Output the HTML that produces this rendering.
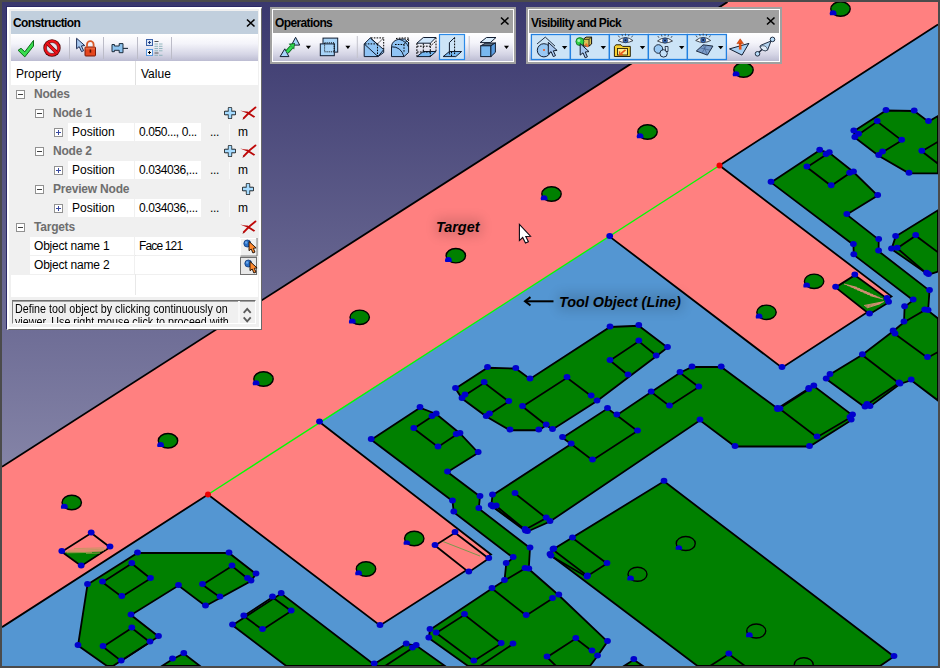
<!DOCTYPE html>
<html><head><meta charset="utf-8"><title>Construction</title>
<style>
html,body{margin:0;padding:0;background:#4b4b4b;}
body{width:940px;height:668px;position:relative;overflow:hidden;font-family:"Liberation Sans",sans-serif;font-size:12px;color:#000;}
.abs{position:absolute;}
.lbl{position:absolute;font-family:"Liberation Sans",sans-serif;font-weight:bold;font-style:italic;font-size:14.4px;color:#000;white-space:nowrap;line-height:15px;}
.panel{position:absolute;box-sizing:border-box;}
.ptitle{position:absolute;left:4px;top:4px;right:4px;height:23px;font-weight:bold;font-size:12px;line-height:23px;white-space:nowrap;}
.ptitle span{position:absolute;left:2px;top:0;}
.tb{position:absolute;background:linear-gradient(#ffffff 0%,#f4f4fa 35%,#d6d6e6 75%,#bcbcd2 100%);}
.row{position:absolute;left:4px;width:247px;height:19px;line-height:18px;white-space:nowrap;}
.g{font-weight:bold;color:#6e6e6e;letter-spacing:-0.2px;}
.w{position:absolute;background:#fff;top:0;height:18px;}
.t{position:absolute;top:0;}
.v{letter-spacing:-0.4px;}
.box{position:absolute;width:7px;height:7px;border:1px solid #919191;background:#fff;top:5px;}
.box i{position:absolute;left:1px;top:3px;width:5px;height:1px;background:#404040;}
.box b{position:absolute;left:3px;top:1px;width:1px;height:5px;background:#3a4aa0;}
.box.p i{background:#3a4aa0;}
.sep{position:absolute;top:3px;width:1px;height:22px;background:#bcbcc8;}
</style></head><body>
<svg width="940" height="668" viewBox="0 0 940 668" style="position:absolute;left:0;top:0">
<defs><linearGradient id="bg" x1="0" y1="0" x2="0" y2="1"><stop offset="0" stop-color="#3a386e"/><stop offset="1" stop-color="#a4a4bf"/></linearGradient><clipPath id="vp"><rect x="2" y="2" width="936" height="664"/></clipPath><filter id="glow" x="-30%" y="-80%" width="160%" height="260%"><feGaussianBlur stdDeviation="6"/></filter></defs>
<rect x="0" y="0" width="940" height="668" fill="#4b4b4b"/>
<rect x="2" y="2" width="936" height="664" fill="url(#bg)"/>
<g clip-path="url(#vp)">
<polygon points="2.00,627.12 938.00,24.53 938.00,666.00 2.00,666.00" fill="#5496d2"/>
<polygon points="2.00,466.70 727.50,2.00 938.00,2.00 938.00,24.53 719.50,165.50 891.50,296.40 782.00,367.70 609.70,236.60 319.50,422.00 491.00,554.50 380.00,625.50 208.00,494.50 2.00,627.12" fill="#ff8080"/>
<g filter="url(#glow)" opacity="0.13"><rect x="436" y="218" width="46" height="18" fill="#000"/><rect x="558" y="293" width="125" height="18" fill="#000"/></g>
<polyline points="2.00,466.70 727.50,2.00" fill="none" stroke="#000" stroke-width="1.8"/>
<polyline points="938.00,24.53 719.50,165.50 891.50,296.40 782.00,367.70 609.70,236.60" fill="none" stroke="#000" stroke-width="1.8"/>
<polyline points="319.50,422.00 491.00,554.50 380.00,625.50 208.00,494.50 2.00,627.12" fill="none" stroke="#000" stroke-width="1.8"/>
<line x1="208" y1="494.5" x2="719.5" y2="165.5" stroke="#00ff00" stroke-width="1.35"/>
<ellipse cx="840.5" cy="9" rx="9.7" ry="7.2" fill="#008000" stroke="#000" stroke-width="1.4"/>
<ellipse cx="743.5" cy="70" rx="9.7" ry="7.2" fill="#008000" stroke="#000" stroke-width="1.4"/>
<ellipse cx="647.5" cy="132" rx="9.7" ry="7.2" fill="#008000" stroke="#000" stroke-width="1.4"/>
<ellipse cx="551.5" cy="194" rx="9.7" ry="7.2" fill="#008000" stroke="#000" stroke-width="1.4"/>
<ellipse cx="455.8" cy="255.7" rx="9.7" ry="7.2" fill="#008000" stroke="#000" stroke-width="1.4"/>
<ellipse cx="359.7" cy="317.3" rx="9.7" ry="7.2" fill="#008000" stroke="#000" stroke-width="1.4"/>
<ellipse cx="263.5" cy="379" rx="9.7" ry="7.2" fill="#008000" stroke="#000" stroke-width="1.4"/>
<ellipse cx="168.0" cy="440.75" rx="9.7" ry="7.2" fill="#008000" stroke="#000" stroke-width="1.4"/>
<ellipse cx="71.75" cy="502.5" rx="9.7" ry="7.2" fill="#008000" stroke="#000" stroke-width="1.4"/>
<ellipse cx="814.1" cy="281.3" rx="9.7" ry="7.2" fill="#008000" stroke="#000" stroke-width="1.4"/>
<ellipse cx="766.5" cy="312.3" rx="9.7" ry="7.2" fill="#008000" stroke="#000" stroke-width="1.4"/>
<ellipse cx="414.25" cy="538.5" rx="9.7" ry="7.2" fill="#008000" stroke="#000" stroke-width="1.4"/>
<ellipse cx="366.0" cy="569" rx="9.7" ry="7.2" fill="#008000" stroke="#000" stroke-width="1.4"/>
<polygon points="91.25,533.00 110.00,547.25 81.25,566.00 61.75,551.75" fill="#ff8080"/>
<polygon points="63.50,552.60 104.00,551.60 81.40,565.80" fill="#008000"/>
<polygon points="91.25,533.00 110.00,547.25 81.25,566.00 61.75,551.75" fill="none" stroke="#000" stroke-width="1.8"/>
<polygon points="455.00,532.75 488.75,558.50 468.75,572.25 435.00,545.50" fill="#ff8080" stroke="#000" stroke-width="1.8"/>
<polygon points="854.80,275.20 887.00,298.60 888.60,302.40 869.50,314.20 835.60,287.40" fill="#008000" stroke="#000" stroke-width="1.8"/>
<g shape-rendering="auto"><line x1="74" y1="548.6" x2="104" y2="547.9" stroke="#b89a5c" stroke-width="0.8"/><line x1="68" y1="550.3" x2="106" y2="549.2" stroke="#b89a5c" stroke-width="0.8"/><line x1="66" y1="551.6" x2="104" y2="550.6" stroke="#b89a5c" stroke-width="0.8"/><line x1="67" y1="552.8" x2="92" y2="552.4" stroke="#b89a5c" stroke-width="0.8"/><line x1="86" y1="553.3" x2="100" y2="553.0" stroke="#b89a5c" stroke-width="0.8"/><line x1="844.0" y1="284.0" x2="857.0" y2="287.4" stroke="#e89080" stroke-width="1" opacity="0.85"/><line x1="847.2" y1="285.4" x2="860.2" y2="288.8" stroke="#e89080" stroke-width="1" opacity="0.85"/><line x1="850.5" y1="286.9" x2="863.5" y2="290.3" stroke="#e89080" stroke-width="1" opacity="0.85"/><line x1="853.8" y1="288.4" x2="866.8" y2="291.8" stroke="#e89080" stroke-width="1" opacity="0.85"/><line x1="857.0" y1="289.8" x2="870.0" y2="293.2" stroke="#e89080" stroke-width="1" opacity="0.85"/><line x1="860.2" y1="291.2" x2="873.2" y2="294.6" stroke="#e89080" stroke-width="1" opacity="0.85"/><line x1="863.5" y1="292.7" x2="876.5" y2="296.1" stroke="#e89080" stroke-width="1" opacity="0.85"/><line x1="866.8" y1="294.1" x2="879.8" y2="297.5" stroke="#e89080" stroke-width="1" opacity="0.85"/><line x1="870.0" y1="295.6" x2="883.0" y2="299.0" stroke="#e89080" stroke-width="1" opacity="0.85"/><line x1="864.0" y1="305.5" x2="884.0" y2="301.6" stroke="#e89080" stroke-width="1" opacity="0.85"/><line x1="865.0" y1="306.3" x2="882.7" y2="302.3" stroke="#e89080" stroke-width="1" opacity="0.85"/><line x1="866.0" y1="307.1" x2="881.3" y2="303.1" stroke="#e89080" stroke-width="1" opacity="0.85"/><line x1="867.0" y1="307.9" x2="880.0" y2="303.8" stroke="#e89080" stroke-width="1" opacity="0.85"/><line x1="443" y1="541.5" x2="480" y2="556" stroke="#58a040" stroke-width="0.8"/></g>
<polygon points="853.80,131.20 886.00,110.50 914.20,111.00 928.50,121.60 938.00,116.00 938.00,173.30 909.00,173.30 878.70,155.70 854.80,137.50" fill="#008000" stroke="#000" stroke-width="1.8"/>
<polyline points="858.60,134.40 877.20,121.60 901.70,140.40 882.50,152.20" fill="none" stroke="#000" stroke-width="1.8"/>
<polyline points="938.00,141.70 921.80,151.30 938.00,163.70" fill="none" stroke="#000" stroke-width="1.8"/>
<polygon points="771.00,182.40 819.70,150.30 829.30,152.80 853.50,172.00 877.70,195.50 846.80,214.60 878.70,239.60 878.60,251.20 929.50,290.60 928.10,310.70 938.00,318.50 938.00,400.50 911.25,380.25 900.00,384.00 870.00,406.50 865.00,407.25 826.25,379.00 830.00,374.50 862.40,354.80 893.10,331.20 904.00,322.20 904.60,306.90 913.20,300.20 853.80,254.90 853.40,244.70" fill="#008000" stroke="#000" stroke-width="1.8"/>
<polyline points="826.00,154.70 806.90,167.20 831.20,185.80 849.60,173.30" fill="none" stroke="#000" stroke-width="1.8"/>
<polyline points="862.50,355.25 900.00,384.00" fill="none" stroke="#000" stroke-width="1.8"/>
<polyline points="867.00,404.50 899.00,383.00" fill="none" stroke="#000" stroke-width="1.8"/>
<polyline points="895.00,334.00 927.50,357.75 938.00,352.00" fill="none" stroke="#000" stroke-width="1.8"/>
<polyline points="904.00,322.20 924.70,310.20 928.10,310.70" fill="none" stroke="#000" stroke-width="1.8"/>
<polygon points="895.60,236.60 938.00,210.20 938.00,271.50 928.50,274.70 891.50,249.10" fill="#008000" stroke="#000" stroke-width="1.8"/>
<polyline points="897.20,248.30 915.70,235.70 938.00,252.30" fill="none" stroke="#000" stroke-width="1.8"/>
<polyline points="897.20,248.30 926.60,273.40" fill="none" stroke="#000" stroke-width="1.8"/>
<polygon points="492.50,495.25 571.25,444.00 562.50,437.75 607.50,408.50 616.75,415.25 651.25,392.00 680.00,372.75 692.00,367.00 721.25,367.00 777.50,408.50 808.75,388.50 813.75,386.00 852.50,415.25 851.25,420.25 809.50,446.50 735.00,446.50 700.00,420.25 550.00,521.50 527.50,531.50 491.25,505.50" fill="#008000" stroke="#000" stroke-width="1.8"/>
<polyline points="571.25,444.00 592.50,460.25 637.50,431.00 616.75,415.25" fill="none" stroke="#000" stroke-width="1.8"/>
<polyline points="651.25,392.00 669.50,406.00 698.75,387.00 680.00,372.75" fill="none" stroke="#000" stroke-width="1.8"/>
<polyline points="780.00,409.00 817.00,437.25 850.00,417.75" fill="none" stroke="#000" stroke-width="1.8"/>
<polyline points="777.50,409.50 808.75,389.50" fill="none" stroke="#000" stroke-width="1.8"/>
<polyline points="496.25,506.00 525.00,529.75 546.25,518.00 515.00,493.50" fill="none" stroke="#000" stroke-width="1.8"/>
<polyline points="493.00,507.00 525.50,531.00" fill="none" stroke="#000" stroke-width="1.8"/>
<polygon points="455.50,388.50 487.50,367.75 515.75,368.50 530.00,379.00 610.00,327.00 638.75,325.75 667.50,347.50 656.25,356.25 597.00,401.00 552.50,429.50 546.25,425.25 538.75,430.25 510.00,430.25 486.25,416.50 462.00,398.50" fill="#008000" stroke="#000" stroke-width="1.8"/>
<polyline points="465.00,395.25 484.25,382.75 508.75,401.50 489.50,414.00" fill="none" stroke="#000" stroke-width="1.8"/>
<polyline points="546.25,425.25 522.50,406.50 567.00,377.75 591.25,396.00" fill="none" stroke="#000" stroke-width="1.8"/>
<polyline points="656.25,355.50 638.75,341.25 610.00,360.50 628.00,375.00" fill="none" stroke="#000" stroke-width="1.8"/>
<polygon points="371.25,439.75 420.00,407.75 436.25,414.00 460.00,433.50 478.25,452.75 447.50,472.00 480.00,496.50 478.75,508.50 530.00,548.00 528.75,569.00 558.75,595.25 607.50,641.50 597.50,656.00 590.00,666.00 468.00,666.00 428.75,638.00 430.00,629.75 492.00,588.50 504.50,580.50 506.25,563.50 513.25,557.75 453.75,512.25 452.50,501.00" fill="#008000" stroke="#000" stroke-width="1.8"/>
<polyline points="432.00,416.50 413.75,428.50 438.00,447.00 456.25,434.75" fill="none" stroke="#000" stroke-width="1.8"/>
<polyline points="492.00,588.50 526.25,615.50 552.50,598.50" fill="none" stroke="#000" stroke-width="1.8"/>
<polyline points="504.50,580.50 525.00,568.50 528.75,569.00" fill="none" stroke="#000" stroke-width="1.8"/>
<polyline points="436.25,633.00 464.50,614.75 501.25,643.50 473.75,661.00 436.25,633.00" fill="none" stroke="#000" stroke-width="1.8"/>
<polyline points="513.00,644.00 480.00,666.00" fill="none" stroke="#000" stroke-width="1.8"/>
<polyline points="556.00,666.00 547.00,657.25 575.75,638.50 592.00,651.00" fill="none" stroke="#000" stroke-width="1.8"/>
<polygon points="137.50,553.00 229.00,553.00 256.00,574.00 251.00,581.00 205.50,606.00 178.50,585.50 131.00,615.00 158.50,636.50 113.00,666.00 107.00,666.00 78.00,645.50 87.50,584.50" fill="#008000" stroke="#000" stroke-width="1.8"/>
<polyline points="131.75,563.50 102.50,582.25 121.75,596.75 150.50,578.50 131.75,563.50" fill="none" stroke="#000" stroke-width="1.8"/>
<polyline points="220.00,597.25 202.50,584.75 232.00,566.00 247.50,578.50" fill="none" stroke="#000" stroke-width="1.8"/>
<polyline points="131.75,628.00 103.00,646.75 121.25,661.00 150.00,642.25 131.75,628.00" fill="none" stroke="#000" stroke-width="1.8"/>
<polygon points="232.50,625.25 281.25,593.50 376.00,666.00 286.25,666.00" fill="#008000" stroke="#000" stroke-width="1.8"/>
<polyline points="272.50,597.25 243.75,616.00 262.50,629.75 291.25,611.00 272.50,597.25" fill="none" stroke="#000" stroke-width="1.8"/>
<polygon points="374.25,664.00 406.25,644.00 416.25,645.50 445.00,666.00 371.00,666.00" fill="#008000" stroke="#000" stroke-width="1.8"/>
<polyline points="412.50,648.00 385.00,666.00" fill="none" stroke="#000" stroke-width="1.8"/>
<polygon points="172.50,659.25 183.75,653.50 200.00,666.00 162.00,666.00" fill="#008000" stroke="#000" stroke-width="1.8"/>
<polygon points="664.00,481.30 894.00,656.50 880.00,666.00 697.50,666.00 550.00,554.75 553.75,549.00" fill="#008000" stroke="#000" stroke-width="1.8"/>
<polyline points="553.00,549.75 587.50,576.00 607.00,563.50 572.50,538.00" fill="none" stroke="#000" stroke-width="1.8"/>
<polyline points="551.00,556.00 587.00,577.00" fill="none" stroke="#000" stroke-width="1.8"/>
<polyline points="710.00,666.00 728.75,654.00 745.00,666.00" fill="none" stroke="#000" stroke-width="1.8"/>
<polygon points="633.75,659.75 643.00,666.00 624.00,666.00" fill="#008000" stroke="#000" stroke-width="1.8"/>
<ellipse cx="685.75" cy="543.5" rx="9.5" ry="7" fill="none" stroke="#000" stroke-width="1.4"/>
<ellipse cx="637.5" cy="574.25" rx="9.5" ry="7" fill="none" stroke="#000" stroke-width="1.4"/>
<ellipse cx="756.25" cy="631" rx="9.5" ry="7" fill="none" stroke="#000" stroke-width="1.4"/>
<ellipse cx="803.75" cy="664.75" rx="9.5" ry="7" fill="none" stroke="#000" stroke-width="1.4"/>
<ellipse cx="91.2" cy="532.4" rx="3.4" ry="3.0" fill="#0000cd"/>
<ellipse cx="110.0" cy="546.6" rx="3.4" ry="3.0" fill="#0000cd"/>
<ellipse cx="81.2" cy="565.4" rx="3.4" ry="3.0" fill="#0000cd"/>
<ellipse cx="61.8" cy="551.1" rx="3.4" ry="3.0" fill="#0000cd"/>
<ellipse cx="455.0" cy="532.1" rx="3.4" ry="3.0" fill="#0000cd"/>
<ellipse cx="488.8" cy="557.9" rx="3.4" ry="3.0" fill="#0000cd"/>
<ellipse cx="468.8" cy="571.6" rx="3.4" ry="3.0" fill="#0000cd"/>
<ellipse cx="435.0" cy="544.9" rx="3.4" ry="3.0" fill="#0000cd"/>
<ellipse cx="854.8" cy="274.6" rx="3.4" ry="3.0" fill="#0000cd"/>
<ellipse cx="887.0" cy="298.0" rx="3.4" ry="3.0" fill="#0000cd"/>
<ellipse cx="888.6" cy="301.8" rx="3.4" ry="3.0" fill="#0000cd"/>
<ellipse cx="869.5" cy="313.6" rx="3.4" ry="3.0" fill="#0000cd"/>
<ellipse cx="835.6" cy="286.8" rx="3.4" ry="3.0" fill="#0000cd"/>
<ellipse cx="853.8" cy="130.6" rx="3.4" ry="3.0" fill="#0000cd"/>
<ellipse cx="886.0" cy="109.9" rx="3.4" ry="3.0" fill="#0000cd"/>
<ellipse cx="914.2" cy="110.4" rx="3.4" ry="3.0" fill="#0000cd"/>
<ellipse cx="928.5" cy="121.0" rx="3.4" ry="3.0" fill="#0000cd"/>
<ellipse cx="909.0" cy="172.7" rx="3.4" ry="3.0" fill="#0000cd"/>
<ellipse cx="878.7" cy="155.1" rx="3.4" ry="3.0" fill="#0000cd"/>
<ellipse cx="854.8" cy="136.9" rx="3.4" ry="3.0" fill="#0000cd"/>
<ellipse cx="858.6" cy="133.8" rx="3.4" ry="3.0" fill="#0000cd"/>
<ellipse cx="877.2" cy="121.0" rx="3.4" ry="3.0" fill="#0000cd"/>
<ellipse cx="901.7" cy="139.8" rx="3.4" ry="3.0" fill="#0000cd"/>
<ellipse cx="882.5" cy="151.6" rx="3.4" ry="3.0" fill="#0000cd"/>
<ellipse cx="921.8" cy="150.7" rx="3.4" ry="3.0" fill="#0000cd"/>
<ellipse cx="771.0" cy="181.8" rx="3.4" ry="3.0" fill="#0000cd"/>
<ellipse cx="819.7" cy="149.7" rx="3.4" ry="3.0" fill="#0000cd"/>
<ellipse cx="829.3" cy="152.2" rx="3.4" ry="3.0" fill="#0000cd"/>
<ellipse cx="853.5" cy="171.4" rx="3.4" ry="3.0" fill="#0000cd"/>
<ellipse cx="877.7" cy="194.9" rx="3.4" ry="3.0" fill="#0000cd"/>
<ellipse cx="846.8" cy="214.0" rx="3.4" ry="3.0" fill="#0000cd"/>
<ellipse cx="878.7" cy="239.0" rx="3.4" ry="3.0" fill="#0000cd"/>
<ellipse cx="878.6" cy="250.6" rx="3.4" ry="3.0" fill="#0000cd"/>
<ellipse cx="929.5" cy="290.0" rx="3.4" ry="3.0" fill="#0000cd"/>
<ellipse cx="928.1" cy="310.1" rx="3.4" ry="3.0" fill="#0000cd"/>
<ellipse cx="911.2" cy="379.6" rx="3.4" ry="3.0" fill="#0000cd"/>
<ellipse cx="900.0" cy="383.4" rx="3.4" ry="3.0" fill="#0000cd"/>
<ellipse cx="870.0" cy="405.9" rx="3.4" ry="3.0" fill="#0000cd"/>
<ellipse cx="865.0" cy="406.6" rx="3.4" ry="3.0" fill="#0000cd"/>
<ellipse cx="826.2" cy="378.4" rx="3.4" ry="3.0" fill="#0000cd"/>
<ellipse cx="830.0" cy="373.9" rx="3.4" ry="3.0" fill="#0000cd"/>
<ellipse cx="862.4" cy="354.2" rx="3.4" ry="3.0" fill="#0000cd"/>
<ellipse cx="893.1" cy="330.6" rx="3.4" ry="3.0" fill="#0000cd"/>
<ellipse cx="904.0" cy="321.6" rx="3.4" ry="3.0" fill="#0000cd"/>
<ellipse cx="904.6" cy="306.3" rx="3.4" ry="3.0" fill="#0000cd"/>
<ellipse cx="913.2" cy="299.6" rx="3.4" ry="3.0" fill="#0000cd"/>
<ellipse cx="853.8" cy="254.3" rx="3.4" ry="3.0" fill="#0000cd"/>
<ellipse cx="853.4" cy="244.1" rx="3.4" ry="3.0" fill="#0000cd"/>
<ellipse cx="826.0" cy="154.1" rx="3.4" ry="3.0" fill="#0000cd"/>
<ellipse cx="806.9" cy="166.6" rx="3.4" ry="3.0" fill="#0000cd"/>
<ellipse cx="831.2" cy="185.2" rx="3.4" ry="3.0" fill="#0000cd"/>
<ellipse cx="849.6" cy="172.7" rx="3.4" ry="3.0" fill="#0000cd"/>
<ellipse cx="867.0" cy="403.9" rx="3.4" ry="3.0" fill="#0000cd"/>
<ellipse cx="899.0" cy="382.4" rx="3.4" ry="3.0" fill="#0000cd"/>
<ellipse cx="895.0" cy="333.4" rx="3.4" ry="3.0" fill="#0000cd"/>
<ellipse cx="927.5" cy="357.1" rx="3.4" ry="3.0" fill="#0000cd"/>
<ellipse cx="924.7" cy="309.6" rx="3.4" ry="3.0" fill="#0000cd"/>
<ellipse cx="895.6" cy="236.0" rx="3.4" ry="3.0" fill="#0000cd"/>
<ellipse cx="928.5" cy="274.1" rx="3.4" ry="3.0" fill="#0000cd"/>
<ellipse cx="891.5" cy="248.5" rx="3.4" ry="3.0" fill="#0000cd"/>
<ellipse cx="897.2" cy="247.7" rx="3.4" ry="3.0" fill="#0000cd"/>
<ellipse cx="915.7" cy="235.1" rx="3.4" ry="3.0" fill="#0000cd"/>
<ellipse cx="926.6" cy="272.8" rx="3.4" ry="3.0" fill="#0000cd"/>
<ellipse cx="492.5" cy="494.6" rx="3.4" ry="3.0" fill="#0000cd"/>
<ellipse cx="571.2" cy="443.4" rx="3.4" ry="3.0" fill="#0000cd"/>
<ellipse cx="562.5" cy="437.1" rx="3.4" ry="3.0" fill="#0000cd"/>
<ellipse cx="607.5" cy="407.9" rx="3.4" ry="3.0" fill="#0000cd"/>
<ellipse cx="616.8" cy="414.6" rx="3.4" ry="3.0" fill="#0000cd"/>
<ellipse cx="651.2" cy="391.4" rx="3.4" ry="3.0" fill="#0000cd"/>
<ellipse cx="680.0" cy="372.1" rx="3.4" ry="3.0" fill="#0000cd"/>
<ellipse cx="692.0" cy="366.4" rx="3.4" ry="3.0" fill="#0000cd"/>
<ellipse cx="721.2" cy="366.4" rx="3.4" ry="3.0" fill="#0000cd"/>
<ellipse cx="777.5" cy="407.9" rx="3.4" ry="3.0" fill="#0000cd"/>
<ellipse cx="808.8" cy="387.9" rx="3.4" ry="3.0" fill="#0000cd"/>
<ellipse cx="813.8" cy="385.4" rx="3.4" ry="3.0" fill="#0000cd"/>
<ellipse cx="852.5" cy="414.6" rx="3.4" ry="3.0" fill="#0000cd"/>
<ellipse cx="851.2" cy="419.6" rx="3.4" ry="3.0" fill="#0000cd"/>
<ellipse cx="809.5" cy="445.9" rx="3.4" ry="3.0" fill="#0000cd"/>
<ellipse cx="735.0" cy="445.9" rx="3.4" ry="3.0" fill="#0000cd"/>
<ellipse cx="700.0" cy="419.6" rx="3.4" ry="3.0" fill="#0000cd"/>
<ellipse cx="550.0" cy="520.9" rx="3.4" ry="3.0" fill="#0000cd"/>
<ellipse cx="527.5" cy="530.9" rx="3.4" ry="3.0" fill="#0000cd"/>
<ellipse cx="491.2" cy="504.9" rx="3.4" ry="3.0" fill="#0000cd"/>
<ellipse cx="592.5" cy="459.6" rx="3.4" ry="3.0" fill="#0000cd"/>
<ellipse cx="637.5" cy="430.4" rx="3.4" ry="3.0" fill="#0000cd"/>
<ellipse cx="669.5" cy="405.4" rx="3.4" ry="3.0" fill="#0000cd"/>
<ellipse cx="698.8" cy="386.4" rx="3.4" ry="3.0" fill="#0000cd"/>
<ellipse cx="780.0" cy="408.4" rx="3.4" ry="3.0" fill="#0000cd"/>
<ellipse cx="817.0" cy="436.6" rx="3.4" ry="3.0" fill="#0000cd"/>
<ellipse cx="850.0" cy="417.1" rx="3.4" ry="3.0" fill="#0000cd"/>
<ellipse cx="777.5" cy="408.9" rx="3.4" ry="3.0" fill="#0000cd"/>
<ellipse cx="808.8" cy="388.9" rx="3.4" ry="3.0" fill="#0000cd"/>
<ellipse cx="496.2" cy="505.4" rx="3.4" ry="3.0" fill="#0000cd"/>
<ellipse cx="525.0" cy="529.1" rx="3.4" ry="3.0" fill="#0000cd"/>
<ellipse cx="546.2" cy="517.4" rx="3.4" ry="3.0" fill="#0000cd"/>
<ellipse cx="515.0" cy="492.9" rx="3.4" ry="3.0" fill="#0000cd"/>
<ellipse cx="493.0" cy="506.4" rx="3.4" ry="3.0" fill="#0000cd"/>
<ellipse cx="525.5" cy="530.4" rx="3.4" ry="3.0" fill="#0000cd"/>
<ellipse cx="455.5" cy="387.9" rx="3.4" ry="3.0" fill="#0000cd"/>
<ellipse cx="487.5" cy="367.1" rx="3.4" ry="3.0" fill="#0000cd"/>
<ellipse cx="515.8" cy="367.9" rx="3.4" ry="3.0" fill="#0000cd"/>
<ellipse cx="530.0" cy="378.4" rx="3.4" ry="3.0" fill="#0000cd"/>
<ellipse cx="610.0" cy="326.4" rx="3.4" ry="3.0" fill="#0000cd"/>
<ellipse cx="638.8" cy="325.1" rx="3.4" ry="3.0" fill="#0000cd"/>
<ellipse cx="667.5" cy="346.9" rx="3.4" ry="3.0" fill="#0000cd"/>
<ellipse cx="656.2" cy="355.6" rx="3.4" ry="3.0" fill="#0000cd"/>
<ellipse cx="597.0" cy="400.4" rx="3.4" ry="3.0" fill="#0000cd"/>
<ellipse cx="552.5" cy="428.9" rx="3.4" ry="3.0" fill="#0000cd"/>
<ellipse cx="546.2" cy="424.6" rx="3.4" ry="3.0" fill="#0000cd"/>
<ellipse cx="538.8" cy="429.6" rx="3.4" ry="3.0" fill="#0000cd"/>
<ellipse cx="510.0" cy="429.6" rx="3.4" ry="3.0" fill="#0000cd"/>
<ellipse cx="486.2" cy="415.9" rx="3.4" ry="3.0" fill="#0000cd"/>
<ellipse cx="462.0" cy="397.9" rx="3.4" ry="3.0" fill="#0000cd"/>
<ellipse cx="465.0" cy="394.6" rx="3.4" ry="3.0" fill="#0000cd"/>
<ellipse cx="484.2" cy="382.1" rx="3.4" ry="3.0" fill="#0000cd"/>
<ellipse cx="508.8" cy="400.9" rx="3.4" ry="3.0" fill="#0000cd"/>
<ellipse cx="489.5" cy="413.4" rx="3.4" ry="3.0" fill="#0000cd"/>
<ellipse cx="522.5" cy="405.9" rx="3.4" ry="3.0" fill="#0000cd"/>
<ellipse cx="567.0" cy="377.1" rx="3.4" ry="3.0" fill="#0000cd"/>
<ellipse cx="591.2" cy="395.4" rx="3.4" ry="3.0" fill="#0000cd"/>
<ellipse cx="638.8" cy="340.6" rx="3.4" ry="3.0" fill="#0000cd"/>
<ellipse cx="610.0" cy="359.9" rx="3.4" ry="3.0" fill="#0000cd"/>
<ellipse cx="628.0" cy="374.4" rx="3.4" ry="3.0" fill="#0000cd"/>
<ellipse cx="371.2" cy="439.1" rx="3.4" ry="3.0" fill="#0000cd"/>
<ellipse cx="420.0" cy="407.1" rx="3.4" ry="3.0" fill="#0000cd"/>
<ellipse cx="436.2" cy="413.4" rx="3.4" ry="3.0" fill="#0000cd"/>
<ellipse cx="460.0" cy="432.9" rx="3.4" ry="3.0" fill="#0000cd"/>
<ellipse cx="478.2" cy="452.1" rx="3.4" ry="3.0" fill="#0000cd"/>
<ellipse cx="447.5" cy="471.4" rx="3.4" ry="3.0" fill="#0000cd"/>
<ellipse cx="480.0" cy="495.9" rx="3.4" ry="3.0" fill="#0000cd"/>
<ellipse cx="478.8" cy="507.9" rx="3.4" ry="3.0" fill="#0000cd"/>
<ellipse cx="530.0" cy="547.4" rx="3.4" ry="3.0" fill="#0000cd"/>
<ellipse cx="528.8" cy="568.4" rx="3.4" ry="3.0" fill="#0000cd"/>
<ellipse cx="558.8" cy="594.6" rx="3.4" ry="3.0" fill="#0000cd"/>
<ellipse cx="607.5" cy="640.9" rx="3.4" ry="3.0" fill="#0000cd"/>
<ellipse cx="597.5" cy="655.4" rx="3.4" ry="3.0" fill="#0000cd"/>
<ellipse cx="428.8" cy="637.4" rx="3.4" ry="3.0" fill="#0000cd"/>
<ellipse cx="430.0" cy="629.1" rx="3.4" ry="3.0" fill="#0000cd"/>
<ellipse cx="492.0" cy="587.9" rx="3.4" ry="3.0" fill="#0000cd"/>
<ellipse cx="504.5" cy="579.9" rx="3.4" ry="3.0" fill="#0000cd"/>
<ellipse cx="506.2" cy="562.9" rx="3.4" ry="3.0" fill="#0000cd"/>
<ellipse cx="513.2" cy="557.1" rx="3.4" ry="3.0" fill="#0000cd"/>
<ellipse cx="453.8" cy="511.6" rx="3.4" ry="3.0" fill="#0000cd"/>
<ellipse cx="452.5" cy="500.4" rx="3.4" ry="3.0" fill="#0000cd"/>
<ellipse cx="432.0" cy="415.9" rx="3.4" ry="3.0" fill="#0000cd"/>
<ellipse cx="413.8" cy="427.9" rx="3.4" ry="3.0" fill="#0000cd"/>
<ellipse cx="438.0" cy="446.4" rx="3.4" ry="3.0" fill="#0000cd"/>
<ellipse cx="456.2" cy="434.1" rx="3.4" ry="3.0" fill="#0000cd"/>
<ellipse cx="526.2" cy="614.9" rx="3.4" ry="3.0" fill="#0000cd"/>
<ellipse cx="552.5" cy="597.9" rx="3.4" ry="3.0" fill="#0000cd"/>
<ellipse cx="525.0" cy="567.9" rx="3.4" ry="3.0" fill="#0000cd"/>
<ellipse cx="436.2" cy="632.4" rx="3.4" ry="3.0" fill="#0000cd"/>
<ellipse cx="464.5" cy="614.1" rx="3.4" ry="3.0" fill="#0000cd"/>
<ellipse cx="501.2" cy="642.9" rx="3.4" ry="3.0" fill="#0000cd"/>
<ellipse cx="473.8" cy="660.4" rx="3.4" ry="3.0" fill="#0000cd"/>
<ellipse cx="513.0" cy="643.4" rx="3.4" ry="3.0" fill="#0000cd"/>
<ellipse cx="547.0" cy="656.6" rx="3.4" ry="3.0" fill="#0000cd"/>
<ellipse cx="575.8" cy="637.9" rx="3.4" ry="3.0" fill="#0000cd"/>
<ellipse cx="592.0" cy="650.4" rx="3.4" ry="3.0" fill="#0000cd"/>
<ellipse cx="137.5" cy="552.4" rx="3.4" ry="3.0" fill="#0000cd"/>
<ellipse cx="229.0" cy="552.4" rx="3.4" ry="3.0" fill="#0000cd"/>
<ellipse cx="256.0" cy="573.4" rx="3.4" ry="3.0" fill="#0000cd"/>
<ellipse cx="251.0" cy="580.4" rx="3.4" ry="3.0" fill="#0000cd"/>
<ellipse cx="205.5" cy="605.4" rx="3.4" ry="3.0" fill="#0000cd"/>
<ellipse cx="178.5" cy="584.9" rx="3.4" ry="3.0" fill="#0000cd"/>
<ellipse cx="131.0" cy="614.4" rx="3.4" ry="3.0" fill="#0000cd"/>
<ellipse cx="158.5" cy="635.9" rx="3.4" ry="3.0" fill="#0000cd"/>
<ellipse cx="78.0" cy="644.9" rx="3.4" ry="3.0" fill="#0000cd"/>
<ellipse cx="87.5" cy="583.9" rx="3.4" ry="3.0" fill="#0000cd"/>
<ellipse cx="131.8" cy="562.9" rx="3.4" ry="3.0" fill="#0000cd"/>
<ellipse cx="102.5" cy="581.6" rx="3.4" ry="3.0" fill="#0000cd"/>
<ellipse cx="121.8" cy="596.1" rx="3.4" ry="3.0" fill="#0000cd"/>
<ellipse cx="150.5" cy="577.9" rx="3.4" ry="3.0" fill="#0000cd"/>
<ellipse cx="220.0" cy="596.6" rx="3.4" ry="3.0" fill="#0000cd"/>
<ellipse cx="202.5" cy="584.1" rx="3.4" ry="3.0" fill="#0000cd"/>
<ellipse cx="232.0" cy="565.4" rx="3.4" ry="3.0" fill="#0000cd"/>
<ellipse cx="247.5" cy="577.9" rx="3.4" ry="3.0" fill="#0000cd"/>
<ellipse cx="131.8" cy="627.4" rx="3.4" ry="3.0" fill="#0000cd"/>
<ellipse cx="103.0" cy="646.1" rx="3.4" ry="3.0" fill="#0000cd"/>
<ellipse cx="121.2" cy="660.4" rx="3.4" ry="3.0" fill="#0000cd"/>
<ellipse cx="150.0" cy="641.6" rx="3.4" ry="3.0" fill="#0000cd"/>
<ellipse cx="232.5" cy="624.6" rx="3.4" ry="3.0" fill="#0000cd"/>
<ellipse cx="281.2" cy="592.9" rx="3.4" ry="3.0" fill="#0000cd"/>
<ellipse cx="272.5" cy="596.6" rx="3.4" ry="3.0" fill="#0000cd"/>
<ellipse cx="243.8" cy="615.4" rx="3.4" ry="3.0" fill="#0000cd"/>
<ellipse cx="262.5" cy="629.1" rx="3.4" ry="3.0" fill="#0000cd"/>
<ellipse cx="291.2" cy="610.4" rx="3.4" ry="3.0" fill="#0000cd"/>
<ellipse cx="374.2" cy="663.4" rx="3.4" ry="3.0" fill="#0000cd"/>
<ellipse cx="406.2" cy="643.4" rx="3.4" ry="3.0" fill="#0000cd"/>
<ellipse cx="416.2" cy="644.9" rx="3.4" ry="3.0" fill="#0000cd"/>
<ellipse cx="412.5" cy="647.4" rx="3.4" ry="3.0" fill="#0000cd"/>
<ellipse cx="172.5" cy="658.6" rx="3.4" ry="3.0" fill="#0000cd"/>
<ellipse cx="183.8" cy="652.9" rx="3.4" ry="3.0" fill="#0000cd"/>
<ellipse cx="664.0" cy="480.7" rx="3.4" ry="3.0" fill="#0000cd"/>
<ellipse cx="894.0" cy="655.9" rx="3.4" ry="3.0" fill="#0000cd"/>
<ellipse cx="550.0" cy="554.1" rx="3.4" ry="3.0" fill="#0000cd"/>
<ellipse cx="553.8" cy="548.4" rx="3.4" ry="3.0" fill="#0000cd"/>
<ellipse cx="553.0" cy="549.1" rx="3.4" ry="3.0" fill="#0000cd"/>
<ellipse cx="587.5" cy="575.4" rx="3.4" ry="3.0" fill="#0000cd"/>
<ellipse cx="607.0" cy="562.9" rx="3.4" ry="3.0" fill="#0000cd"/>
<ellipse cx="572.5" cy="537.4" rx="3.4" ry="3.0" fill="#0000cd"/>
<ellipse cx="551.0" cy="555.4" rx="3.4" ry="3.0" fill="#0000cd"/>
<ellipse cx="587.0" cy="576.4" rx="3.4" ry="3.0" fill="#0000cd"/>
<ellipse cx="728.8" cy="653.4" rx="3.4" ry="3.0" fill="#0000cd"/>
<ellipse cx="633.8" cy="659.1" rx="3.4" ry="3.0" fill="#0000cd"/>
<ellipse cx="609.7" cy="236.0" rx="3.4" ry="3.0" fill="#0000cd"/>
<ellipse cx="319.5" cy="421.4" rx="3.4" ry="3.0" fill="#0000cd"/>
<ellipse cx="782.0" cy="367.1" rx="3.4" ry="3.0" fill="#0000cd"/>
<ellipse cx="380.0" cy="624.9" rx="3.4" ry="3.0" fill="#0000cd"/>
<path d="M830.0,15.3 L829.7,13.6 A3.4,3.4 0 0 1 836.5,13.6 L836.2,15.3 Z" fill="#0000cd"/>
<path d="M733.0,76.3 L732.7,74.6 A3.4,3.4 0 0 1 739.5,74.6 L739.2,76.3 Z" fill="#0000cd"/>
<path d="M637.0,138.3 L636.7,136.6 A3.4,3.4 0 0 1 643.5,136.6 L643.2,138.3 Z" fill="#0000cd"/>
<path d="M541.0,200.3 L540.7,198.6 A3.4,3.4 0 0 1 547.5,198.6 L547.2,200.3 Z" fill="#0000cd"/>
<path d="M445.3,262.0 L445.0,260.3 A3.4,3.4 0 0 1 451.8,260.3 L451.5,262.0 Z" fill="#0000cd"/>
<path d="M349.2,323.6 L348.9,321.9 A3.4,3.4 0 0 1 355.7,321.9 L355.4,323.6 Z" fill="#0000cd"/>
<path d="M253.0,385.3 L252.7,383.6 A3.4,3.4 0 0 1 259.5,383.6 L259.2,385.3 Z" fill="#0000cd"/>
<path d="M157.5,447.1 L157.2,445.4 A3.4,3.4 0 0 1 164.0,445.4 L163.7,447.1 Z" fill="#0000cd"/>
<path d="M61.2,508.8 L60.9,507.1 A3.4,3.4 0 0 1 67.8,507.1 L67.4,508.8 Z" fill="#0000cd"/>
<path d="M803.6,287.6 L803.3,285.9 A3.4,3.4 0 0 1 810.1,285.9 L809.8,287.6 Z" fill="#0000cd"/>
<path d="M756.0,318.6 L755.7,316.9 A3.4,3.4 0 0 1 762.5,316.9 L762.2,318.6 Z" fill="#0000cd"/>
<path d="M403.8,544.8 L403.5,543.1 A3.4,3.4 0 0 1 410.2,543.1 L410.0,544.8 Z" fill="#0000cd"/>
<path d="M355.5,575.3 L355.2,573.6 A3.4,3.4 0 0 1 362.0,573.6 L361.7,575.3 Z" fill="#0000cd"/>
<path d="M675.8,549.8 L675.5,548.1 A3.4,3.4 0 0 1 682.2,548.1 L682.0,549.8 Z" fill="#0000cd"/>
<path d="M627.5,580.5 L627.2,578.8 A3.4,3.4 0 0 1 634.0,578.8 L633.7,580.5 Z" fill="#0000cd"/>
<path d="M746.2,637.3 L746.0,635.6 A3.4,3.4 0 0 1 752.8,635.6 L752.5,637.3 Z" fill="#0000cd"/>
<path d="M793.8,671.0 L793.5,669.3 A3.4,3.4 0 0 1 800.2,669.3 L800.0,671.0 Z" fill="#0000cd"/>
<circle cx="208" cy="494.5" r="3" fill="#f00000" shape-rendering="auto"/><circle cx="719.5" cy="165.5" r="3" fill="#f00000" shape-rendering="auto"/>
</g>
<g shape-rendering="auto"><line x1="526" y1="301.3" x2="553.5" y2="301.3" stroke="#000" stroke-width="2"/><polyline points="530.5,297.1 525,301.3 530.5,305.5" fill="none" stroke="#000" stroke-width="2"/>
<path d="M519.4,224.4 L519.4,240.6 L522.7,237.5 L525.5,243 L528.4,241.7 L525.8,236.4 L530.5,236.2 Z" fill="#fff" stroke="#0a0a14" stroke-width="1.1" stroke-linejoin="miter"/></g>
</svg>
<div class="lbl" style="left:436px;top:219.5px;">Target</div>
<div class="lbl" style="left:559px;top:295px;">Tool Object (Line)</div>

<!-- Construction panel -->
<div class="panel" id="cons" style="left:7px;top:7px;width:255px;height:323px;background:#f0f0f0;border-top:2px solid #fff;border-left:2px solid #fff;border-right:1px solid #696969;border-bottom:1px solid #696969;box-shadow:-1px -1px 0 #2a2866;">
  <div class="abs" style="right:0;top:0;bottom:0;width:2px;background:#fff;"></div>
  <div class="abs" style="left:0;right:0;bottom:0;height:2px;background:#fff;"></div>
  <div class="abs" style="left:2px;top:2px;width:247px;height:23px;background:#c1cfdd;"></div>
  <div class="abs" style="left:4px;top:3px;height:23px;line-height:23px;font-weight:bold;letter-spacing:-0.62px;">Construction</div>
  <svg class="abs" style="left:236px;top:9px" width="12" height="11" viewBox="0 0 12 11"><path d="M2,1.5 L9.5,8.5 M9.5,1.5 L2,8.5" stroke="#000" stroke-width="1.6" fill="none"/></svg>
  <!-- toolbar -->
  <div class="tb" style="left:2px;top:25px;width:247px;height:27px;">
    <svg class="abs" style="left:0;top:0" width="247" height="28" viewBox="0 0 247 28">
      <!-- check -->
      <path d="M7.100,16.300 L10,14.300 L13.800,17.800 L22.500,6.400 L22.500,12 L13.800,22.900 Z" fill="#38de50" stroke="#0c6a18" stroke-width="1" stroke-linejoin="round"/>
      <!-- no entry -->
      <circle cx="41" cy="14" r="8.700" fill="#5a0808"/>
      <circle cx="41" cy="14" r="7.900" fill="#f01018"/>
      <circle cx="41" cy="14" r="5.500" fill="#e4e4f0" stroke="#5a0808" stroke-width="0.600"/>
      <path d="M36.500,9.500 L45.500,18.500" stroke="#5a0808" stroke-width="3.600"/>
      <path d="M36.200,9.200 L45.800,18.800" stroke="#f01018" stroke-width="2.400"/>
      <!-- cursor + lock -->
      <path d="M65.600,4.300 L65.600,14.800 L68.200,12.600 L70.600,17.600 L72.600,16.700 L70.400,11.900 L73.800,11.600 Z" fill="#a8c8f0" stroke="#1c2c54" stroke-width="1" stroke-linejoin="round"/>
      <rect x="74" y="13" width="10.500" height="9" rx="0.800" fill="#e4461e" stroke="#7a1808" stroke-width="1"/>
      <path d="M76,13 V10.500 a3.300,3.300 0 0 1 6.600,0 V13" fill="none" stroke="#d85828" stroke-width="1.800"/>
      <rect x="78.600" y="15.200" width="1.600" height="3.400" fill="#5a1000"/>
      <rect x="74.500" y="13.500" width="9.500" height="2" fill="#f07850" opacity="0.600"/>
      <!-- pin -->
      <path d="M101,10.500 h2.400 v1.500 h4.800 v-2.400 h3.800 v9.100 h-3.800 v-2.400 h-4.800 v1.400 h-2.400 z" fill="#8ec4f0" stroke="#1c2c3c" stroke-width="1" stroke-linejoin="round"/>
      <path d="M112,14.400 H117" stroke="#1c2c3c" stroke-width="1.100"/>
      <!-- list -->
      <rect x="135.500" y="5.500" width="6" height="6" fill="#dce8f8" stroke="#3c62a8"/><path d="M137,8.5 h3 M138.500,7 v3" stroke="#203a80" stroke-width="1"/>
      <rect x="135.500" y="15.500" width="6" height="6" fill="#f4f8fc" stroke="#5a9ae0"/><path d="M137,18.500 h3 M138.500,17 v3" stroke="#000" stroke-width="1"/>
      <path d="M143.500,7.500 h4 M143.500,19 h4" stroke="#555" stroke-width="1"/><path d="M143.500,10 h8 M143.500,12.300 h8 M143.500,14.500 h8 M143.500,16.800 h8 M143.500,21.300 h8" stroke="#88b0b8" stroke-width="0.900" stroke-dasharray="3.500,1"/>
    </svg>
    <div class="sep" style="left:58px"></div>
    <div class="sep" style="left:92px"></div>
    <div class="sep" style="left:126px"></div>
    <div class="sep" style="left:160px"></div>
  </div>
  <!-- table -->
  <div class="abs" style="left:2px;top:52px;width:247px;height:236px;background:#fff;"></div>
  <div class="abs" style="left:2px;top:76px;width:247px;height:152px;background:#f0f0f0;"></div><div class="abs" style="left:2px;top:228px;width:247px;height:38px;background:#f0f0f0;"></div>
  <div class="abs" style="left:125.5px;top:52px;width:1px;height:24px;background:#e0e0e0;"></div>
  <div class="abs" style="left:125.5px;top:228px;width:1px;height:58px;background:#e8e8e8;"></div>
  <div class="abs" style="left:7px;top:53px;height:24px;line-height:24px;">Property</div>
  <div class="abs" style="left:132px;top:53px;height:24px;line-height:24px;">Value</div>
  <div id="rows" class="abs" style="left:-4px;top:76px;width:251px;height:200px;">
    <div class="row g" style="top:0px;"><div class="box" style="left:7px"><i></i></div><span class="t" style="left:25px">Nodes</span></div>
    <div class="row g" style="top:19px;"><div class="box" style="left:26px"><i></i></div><span class="t" style="left:44px">Node 1</span></div>
    <div class="row" style="top:38px;"><div class="box p" style="left:45px"><i></i><b></b></div><div class="w" style="left:59px;width:66px"></div><div class="w" style="left:126px;width:66px"></div><span class="t" style="left:63px">Position</span><span class="t v" style="left:130px">0.050..., 0...</span><span class="t" style="left:201px;letter-spacing:-0.3px">...</span><div class="abs" style="left:220px;top:1px;width:1px;height:17px;background:#fafafa"></div><span class="t" style="left:229px">m</span></div>
    <div class="row g" style="top:57px;"><div class="box" style="left:26px"><i></i></div><span class="t" style="left:44px">Node 2</span></div>
    <div class="row" style="top:76px;"><div class="box p" style="left:45px"><i></i><b></b></div><div class="w" style="left:59px;width:66px"></div><div class="w" style="left:126px;width:66px"></div><span class="t" style="left:63px">Position</span><span class="t v" style="left:130px">0.034036,...</span><span class="t" style="left:201px;letter-spacing:-0.3px">...</span><div class="abs" style="left:220px;top:1px;width:1px;height:17px;background:#fafafa"></div><span class="t" style="left:229px">m</span></div>
    <div class="row g" style="top:95px;"><div class="box" style="left:26px"><i></i></div><span class="t" style="left:44px">Preview Node</span></div>
    <div class="row" style="top:114px;"><div class="box p" style="left:45px"><i></i><b></b></div><div class="w" style="left:59px;width:66px"></div><div class="w" style="left:126px;width:66px"></div><span class="t" style="left:63px">Position</span><span class="t v" style="left:130px">0.034036,...</span><span class="t" style="left:201px;letter-spacing:-0.3px">...</span><div class="abs" style="left:220px;top:1px;width:1px;height:17px;background:#fafafa"></div><span class="t" style="left:229px">m</span></div>
    <div class="row g" style="top:133px;"><div class="box" style="left:7px"><i></i></div><span class="t" style="left:25px">Targets</span></div>
    <div class="row" style="top:152px;"><div class="w" style="left:21px;width:104px"></div><div class="w" style="left:126px;width:105px"></div><span class="t" style="left:25px;letter-spacing:-0.2px">Object name 1</span><span class="t" style="left:130px;letter-spacing:-0.85px">Face 121</span></div>
    <div class="row" style="top:171px;"><div class="w" style="left:21px;width:104px"></div><div class="w" style="left:126px;width:105px"></div><span class="t" style="left:25px;letter-spacing:-0.2px">Object name 2</span></div>
  </div>
  <!-- row icons -->
  <svg class="abs" style="left:0;top:76px" width="251" height="200" viewBox="0 0 251 200">
    <defs>
      <g id="plus"><path d="M-1.300,-5 h2.600 v3.700 h3.700 v2.600 h-3.700 v3.700 h-2.600 v-3.700 h-3.700 v-2.600 h3.700 z" fill="#a8dcff" stroke="#000" stroke-width="1.700" stroke-linejoin="round"/><path d="M-1.300,-5 h2.600 v3.700 h3.700 v2.600 h-3.700 v3.700 h-2.600 v-3.700 h-3.700 v-2.600 h3.700 z" fill="#a8dcff" stroke="#a8dcff" stroke-width="0.300" stroke-linejoin="round"/></g>
      <g id="rx"><path d="M7.400,-5.600 Q1,-1 -4.200,5.200" stroke="#c00808" stroke-width="1.900" stroke-linecap="round" fill="none"/><path d="M-7.800,-2.600 Q-3,-1.200 -0.500,-1.500 L7.200,3.400 L5.900,4.800 L-1.200,0.200 Q-4,-0.800 -7.800,-2.600 Z" fill="#b80808"/><path d="M-4.200,5.200 L-5.200,6.600" stroke="#702020" stroke-width="0.700"/></g>
      <g id="pick"><circle cx="-0.700" cy="-2" r="3.500" fill="#2a70c8" stroke="#123a78" stroke-width="0.800"/><circle cx="-1.800" cy="-3" r="1.200" fill="#6aa8ec"/><path d="M1,-4 L1,5.200 L3.200,3.500 L4.900,7.500 L7,6.600 L5.300,2.800 L8.100,2.400 Z" fill="#ff8a30" stroke="#1a0a00" stroke-width="0.900" stroke-linejoin="round"/></g>
    </defs>
    <use href="#plus" x="221" y="28"/><use href="#rx" x="239" y="28"/>
    <use href="#plus" x="221" y="66"/><use href="#rx" x="239" y="66"/>
    <use href="#plus" x="239" y="104"/>
    <use href="#rx" x="239" y="142"/>
    <rect x="231.500" y="153.500" width="16" height="17" fill="#f0f0f0" stroke="#fff"/><path d="M231.500,171 H248 V153" fill="none" stroke="#707070" stroke-width="1"/>
    <use href="#pick" x="239" y="160.500"/>
    <rect x="231.500" y="172.500" width="16" height="17" fill="#e8e8e8" stroke="#707070"/>
    <use href="#pick" x="240" y="180.500"/>
  </svg>
  <!-- text box -->
  <div class="abs" style="left:3px;top:291px;width:244px;height:24px;background:#f0f0f0;border-top:1px solid #6c6c6c;border-left:1px solid #828282;border-right:1px solid #fff;border-bottom:1px solid #fff;overflow:hidden;box-sizing:border-box;">
    <div class="abs" style="left:0;top:0;width:243px;height:1px;background:#a0a0a0"></div>
    <div class="abs" style="left:1.500px;top:2px;width:260px;font-size:12px;line-height:13px;white-space:nowrap;transform:scaleX(0.893);transform-origin:0 0;">Define tool object by clicking continuously on<br>viewer. Use right mouse click to proceed with</div>
    <div class="abs" style="left:225px;top:0;width:2px;height:23px;background:#f8f8f8"></div>
    <svg class="abs" style="left:226.500px;top:1.500px" width="16" height="22" viewBox="0 0 16 22"><path d="M3.700,9.800 L7.200,5.800 L10.700,9.800 M3.700,14.300 L7.200,18.300 L10.700,14.300" fill="none" stroke="#5a5a5a" stroke-width="1.800"/></svg>
  </div>
</div>

<!-- Operations panel -->
<div class="panel" style="left:270px;top:7px;width:246px;height:57px;background:#a0a0a0;">
  <div class="abs" style="left:2px;top:2px;right:2px;bottom:2px;background:#fff;"></div>
  <div class="abs" style="left:3px;top:3px;right:3px;height:23px;background:#a0a0a0;"></div>
  <div class="abs" style="left:5px;top:4.5px;height:23px;line-height:23px;font-weight:bold;letter-spacing:-0.62px;">Operations</div>
  <svg class="abs" style="left:229px;top:9px" width="12" height="11" viewBox="0 0 12 11"><path d="M2,1.500 L9.500,8.500 M9.500,1.500 L2,8.500" stroke="#000" stroke-width="1.600" fill="none"/></svg>
  <div class="tb" style="left:3px;top:26px;width:240px;height:28px;">
   <svg class="abs" style="left:0;top:0" width="240" height="28" viewBox="0 0 240 28">
    <!-- icon1 -->
    <path d="M22.600,4.300 L26.700,12.100 L18.500,12.100 Z" fill="#a8d4f8" stroke="#101c30" stroke-linejoin="round"/><path d="M11.800,15.800 L15.900,23.600 L7.100,23.600 Z" fill="#a8d4f8" stroke="#101c30" stroke-linejoin="round"/>
    <path d="M14,19 L18.600,13.800" stroke="#0a6a20" stroke-width="4.200"/><path d="M15.600,10.800 L22,10 L21.200,16.600 Z" fill="#0a6a20"/>
    <path d="M14,19 L18.600,13.800" stroke="#30e050" stroke-width="2.600"/><path d="M17.200,11.700 L21,11.100 L20.500,15 Z" fill="#30e050"/>
    <path d="M32.800,12.800 h5.200 l-2.600,3.200 z" fill="#000"/>
    <!-- icon2 -->
    <rect x="50" y="5.100" width="14.700" height="14" fill="#a8d4f8" stroke="#101c30"/><rect x="47.300" y="10.900" width="14" height="11.800" fill="#a8d4f8" stroke="#101c30"/><rect x="51.600" y="9.800" width="9.600" height="9" fill="none" stroke="#000" stroke-dasharray="1,1.100"/>
    <path d="M72.400,12.800 h5 l-2.500,3.200 z" fill="#000"/>
    <path d="M84.300,3 V25" stroke="#c4c4cc"/>
    <!-- icon3 -->
    <path d="M91.200,10.900 L97.300,4.900 L110.700,16.600 L110.700,19.500 L105,23.600 L91.200,23.600 Z" fill="#90c4f4" stroke="#101c30" stroke-linejoin="round"/>
    <path d="M91.200,10.900 L105,23.600 M97.300,4.900 L104,11 M105,23.600 L110.700,16.600" fill="none" stroke="#101c30"/>
    <path d="M98,4.900 H110.700 V16 M104.500,10.900 L110.700,4.900 M104.500,11 V23 M92,10.900 H104.500" fill="none" stroke="#000" stroke-dasharray="1.600,1.200"/>
    <!-- icon4 -->
    <path d="M118.500,23.600 V13.500 Q119,7.500 126,6.200 L131.500,6 L135.600,9.500 V19.500 L131,23.600 Z" fill="#90c4f4" stroke="#101c30" stroke-linejoin="round"/>
    <path d="M118.500,13.800 Q128,13.500 131,23.600 M126,6.200 Q133,8 135.600,14" fill="none" stroke="#101c30"/>
    <path d="M123,5.500 L128,5 H135.600 V12 M131,11.500 L135.600,5.200 M131,11.500 V20 M122,11.500 H131" fill="none" stroke="#000" stroke-dasharray="1.600,1.200"/>
    <!-- icon5 -->
    <path d="M143.900,10.200 L150.300,4.500 H163 L157.300,10.200 Z" fill="#cfe6fb" stroke="#101c30" stroke-linejoin="round"/>
    <path d="M143.900,23.600 L150.300,18.500 H163 L157.300,23.600 Z" fill="#78b8f0" stroke="#101c30" stroke-linejoin="round"/>
    <path d="M143.900,10.200 V23.600 M157.300,10.200 V23.600 M163,4.500 V18.500 M150.300,10.500 V18.500 M143.900,13.200 H157.300 L163,8 M143.900,19 H157" fill="none" stroke="#000" stroke-dasharray="1.800,1.200"/>
    <!-- icon6 selected -->
    <rect x="166.500" y="1.500" width="25" height="25" fill="#cce4f7" stroke="#2a8ae8" stroke-width="1.200"/>
    <path d="M170.100,23.600 L176.400,18.500 H188.600 L182.800,23.600 Z" fill="#78b8f0" stroke="#101c30" stroke-linejoin="round"/>
    <path d="M176.400,21.500 V9.600 L181.600,4.500" fill="none" stroke="#101c30"/><path d="M181.600,4.500 V21 M178.500,18.500 V23" fill="none" stroke="#000" stroke-dasharray="1.800,1.200"/>
    <path d="M196.200,3 V25" stroke="#c4c4cc"/>
    <!-- icon7 -->
    <path d="M207.100,9.600 L213.500,4.500 H223 L217.300,9.600 Z" fill="#d8ecfc" stroke="#101c30" stroke-linejoin="round"/>
    <path d="M207.700,12.800 L212.800,10 H222.400 L217.900,12.800 Z" fill="#5a6a7a" stroke="#101c30" stroke-linejoin="round"/>
    <rect x="207.700" y="12.800" width="10.200" height="10.800" fill="#78b8f0" stroke="#101c30"/>
    <path d="M217.900,12.800 L222.400,9.800 V19.300 L217.900,23.600 Z" fill="#5a9ce0" stroke="#101c30" stroke-linejoin="round"/>
    <path d="M231,12.800 h5 l-2.500,3.200 z" fill="#000"/>
   </svg>
  </div>
</div>

<!-- Visibility and Pick panel -->
<div class="panel" style="left:526px;top:7px;width:256px;height:57px;background:#a0a0a0;">
  <div class="abs" style="left:2px;top:2px;right:2px;bottom:2px;background:#fff;"></div>
  <div class="abs" style="left:3px;top:3px;right:3px;height:23px;background:#a0a0a0;"></div>
  <div class="abs" style="left:5px;top:4.5px;height:23px;line-height:23px;font-weight:bold;letter-spacing:-0.62px;">Visibility and Pick</div>
  <svg class="abs" style="left:239px;top:9px" width="12" height="11" viewBox="0 0 12 11"><path d="M2,1.500 L9.500,8.500 M9.500,1.500 L2,8.500" stroke="#000" stroke-width="1.600" fill="none"/></svg>
  <div class="tb" style="left:3px;top:26px;width:250px;height:28px;">
   <svg class="abs" style="left:0;top:0" width="250" height="28" viewBox="0 0 250 28">
    <g id="sel"><rect x="2.4" y="1.500" width="39" height="25" fill="#cce4f7" stroke="#2280e0" stroke-width="1.300"/><rect x="41.4" y="1.500" width="39" height="25" fill="#cce4f7" stroke="#2280e0" stroke-width="1.300"/><rect x="80.4" y="1.500" width="39" height="25" fill="#cce4f7" stroke="#2280e0" stroke-width="1.300"/><rect x="119.4" y="1.500" width="39" height="25" fill="#cce4f7" stroke="#2280e0" stroke-width="1.300"/><rect x="158.4" y="1.500" width="39" height="25" fill="#cce4f7" stroke="#2280e0" stroke-width="1.300"/></g>
    <!-- v1 -->
    <circle cx="14.900" cy="17.300" r="6.600" fill="#98c8f4" stroke="#101c30"/><circle cx="15" cy="17" r="1" fill="#f05818"/>
    <path d="M8,11 L16.300,4.100 L26,13.100" fill="none" stroke="#101c30" stroke-width="0.900"/>
    <path d="M19.3,9.4 V20.9 L22.1,18.6 L24.3,23.6 L26.5,22.6 L24.3,17.8 L28.1,17.4 Z" fill="#a8c8f0" stroke="#101c30" stroke-width="1" stroke-linejoin="round"/>
    <path d="M32.900,13.100 h5.400 l-2.700,3.200 z" fill="#000"/>
    <!-- v2 -->
    <path d="M54.300,6.300 L57,4.100 H62.600 V11 L60,13.100 H54.300 Z" fill="#d8c458" stroke="#101010" stroke-linejoin="round"/><path d="M54.300,6.300 H60 V13.100 M60,6.300 L62.600,4.100" fill="none" stroke="#101010" stroke-width="0.800"/>
    <circle cx="50.900" cy="8.600" r="4" fill="#30d448" stroke="#0c6a20" stroke-width="0.800"/><circle cx="49.800" cy="7.400" r="1.500" fill="#a8f4b0"/>
    <path d="M51.2,10.6 V22.1 L54.0,19.799999999999997 L56.2,24.799999999999997 L58.400000000000006,23.799999999999997 L56.2,19.0 L60.0,18.6 Z" fill="#a8c8f0" stroke="#101c30" stroke-width="1" stroke-linejoin="round"/>
    <path d="M56.500,10.800 l2.600,3" stroke="#f07030" stroke-width="2.200"/>
    <path d="M71.600,13.100 h5.400 l-2.700,3.200 z" fill="#000"/>
    <!-- v3 -->
    <path d="M85.400,23.500 V13.400 L87,11.800 H92 L93.600,13.400 H101.300 V23.500 Z" fill="#f8d030" stroke="#2a2208" stroke-linejoin="round"/><rect x="88.500" y="15.500" width="10" height="6.500" fill="#fcec90" stroke="#2a2208" stroke-width="0.900"/><path d="M96.500,16.800 L91.500,20.800" stroke="#e85818" stroke-width="1.600"/><path d="M90.600,18.300 V21.500 H94" fill="none" stroke="#e85818" stroke-width="1.300"/>
    <path d="M89.0,7.6 Q96.5,1.5 104.0,7.6 Q96.5,11.5 89.0,7.6 Z" fill="#f4f8fc" stroke="#30343c" stroke-width="0.900"/><circle cx="96.5" cy="7.2" r="2.500" fill="#3a70c0" stroke="#1a2a50" stroke-width="0.600"/><circle cx="96.5" cy="7.2" r="1" fill="#101828"/><path d="M90.5,4.4 l-1.200,-1.800 M93.5,3.2 l-0.600,-2 M96.5,2.7 v-2 M99.5,3.2 l0.600,-2 M102.5,4.4 l1.200,-1.800" stroke="#30343c" stroke-width="0.800"/>
    <path d="M110.800,13.100 h5.400 l-2.700,3.200 z" fill="#000"/>
    <!-- v4 -->
    <circle cx="129.400" cy="16" r="4.300" fill="#98c8f4" stroke="#101c30" stroke-width="0.900"/><circle cx="134.600" cy="20.400" r="3.700" fill="#c4e0f8" stroke="#101c30" stroke-width="0.900"/><path d="M136,13.500 h3 v5 h-2.200 z" fill="#d8e8f8" stroke="#101c30" stroke-width="0.800"/>
    <path d="M128.5,8.0 Q136,1.9000000000000004 143.5,8.0 Q136,11.9 128.5,8.0 Z" fill="#f4f8fc" stroke="#30343c" stroke-width="0.900"/><circle cx="136" cy="7.6000000000000005" r="2.500" fill="#3a70c0" stroke="#1a2a50" stroke-width="0.600"/><circle cx="136" cy="7.6000000000000005" r="1" fill="#101828"/><path d="M130,4.800000000000001 l-1.200,-1.800 M133,3.6000000000000005 l-0.600,-2 M136,3.1000000000000005 v-2 M139,3.6000000000000005 l0.600,-2 M142,4.800000000000001 l1.200,-1.800" stroke="#30343c" stroke-width="0.800"/>
    <path d="M150,13.100 h5.400 l-2.700,3.200 z" fill="#000"/>
    <!-- v5 -->
    <path d="M167.300,18 L174.200,11.800 L183.900,13.100 L178.400,22.100 Z" fill="#7c9cc8" stroke="#101c30" stroke-width="0.900" stroke-linejoin="round"/><path d="M174.200,11.800 L178.400,22.100 M171,14.800 L181.500,17.300 M177.500,12.300 L173,20" stroke="#3a5888" stroke-width="0.600" fill="none"/>
    <path d="M166.7,7.5 Q174.2,1.4000000000000004 181.7,7.5 Q174.2,11.4 166.7,7.5 Z" fill="#f4f8fc" stroke="#30343c" stroke-width="0.900"/><circle cx="174.2" cy="7.1000000000000005" r="2.500" fill="#3a70c0" stroke="#1a2a50" stroke-width="0.600"/><circle cx="174.2" cy="7.1000000000000005" r="1" fill="#101828"/><path d="M168.2,4.300000000000001 l-1.200,-1.800 M171.2,3.1000000000000005 l-0.600,-2 M174.2,2.6000000000000005 v-2 M177.2,3.1000000000000005 l0.600,-2 M180.2,4.300000000000001 l1.200,-1.800" stroke="#30343c" stroke-width="0.800"/>
    <path d="M189,13.100 h5.400 l-2.700,3.200 z" fill="#000"/>
    <!-- v6 -->
    <path d="M200.500,15.900 L219.900,10.400 L213,22.100 Z" fill="#a8d0f4" stroke="#101c30" stroke-linejoin="round"/><path d="M211.200,16.600 V9.500" stroke="#e85010" stroke-width="2.600"/><path d="M207.900,10.600 L211.200,5.800 L214.500,10.600 Z" fill="#e85010" stroke="#a03000" stroke-width="0.500"/>
    <!-- v7 -->
    <path d="M233.500,16 L229.500,19.800" stroke="#101c30" stroke-width="1.200"/>
    <path d="M242,8 L238.600,17 Q234.500,19.500 231,14 Q230.800,12.800 232,12.200 Z" fill="#b4d4f0" stroke="#101c30" stroke-width="0.900" stroke-linejoin="round"/>
    <path d="M238.600,17 Q234.500,19.500 231,14 Q233,12 236,13 Q238.500,14.500 238.600,17 Z" fill="#e0ecf8" stroke="#101c30" stroke-width="0.600"/>
    <circle cx="243.500" cy="6.400" r="2.300" fill="#b8dcf8" stroke="#101c30" stroke-width="0.900"/><circle cx="228.500" cy="20.800" r="2.300" fill="#b8dcf8" stroke="#101c30" stroke-width="0.900"/>
   </svg>
  </div>
</div>
</body></html>
